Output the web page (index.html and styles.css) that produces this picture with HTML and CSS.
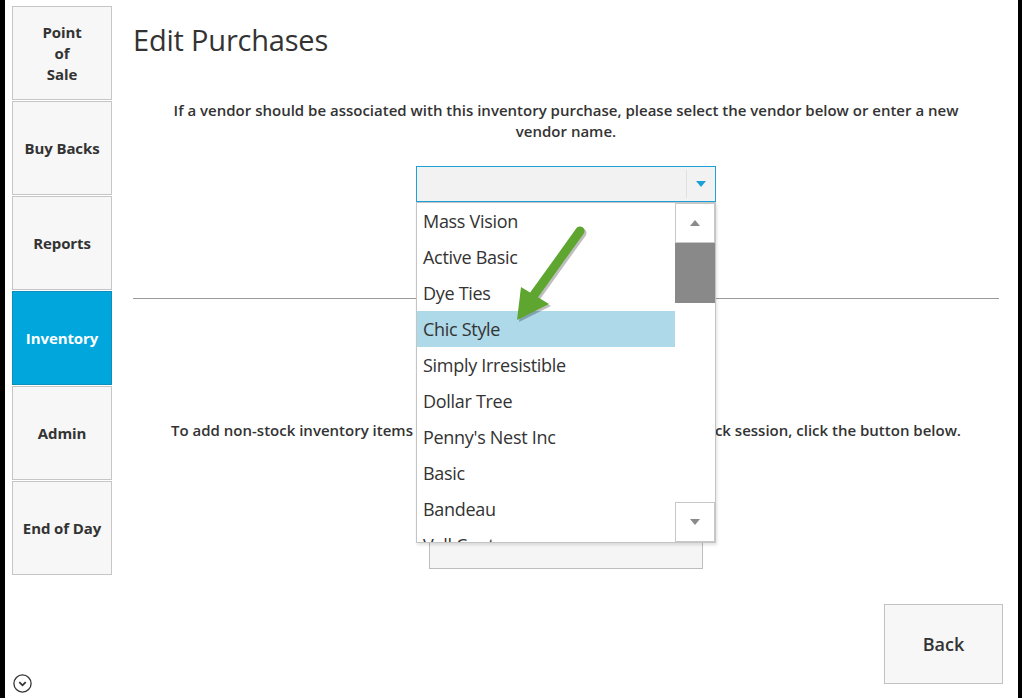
FILE: index.html
```html
<!DOCTYPE html>
<html lang="en">
<head>
    <meta charset="UTF-8">
    <title>Edit Purchases</title>
    <link rel="stylesheet" href="styles.css">
</head>
<body>
    <div class="app">
        <!-- Left navigation -->
        <nav class="sidebar">
            <a class="nav-btn">Point<br>of<br>Sale</a>
            <a class="nav-btn">Buy Backs</a>
            <a class="nav-btn">Reports</a>
            <a class="nav-btn active">Inventory</a>
            <a class="nav-btn">Admin</a>
            <a class="nav-btn">End of Day</a>
            <span class="expand-icon">
                <svg width="19" height="19" viewBox="0 0 19 19">
                    <circle cx="9.5" cy="9.5" r="8.6" fill="none" stroke="#333" stroke-width="1.3"/>
                    <path d="M6.3 8.2 L9.5 11.3 L12.7 8.2" fill="none" stroke="#333" stroke-width="1.8"/>
                </svg>
            </span>
        </nav>

        <main class="content">
            <h1>Edit Purchases</h1>
            <p class="prompt">If a vendor should be associated with this inventory purchase, please select the vendor below or enter a new vendor name.</p>

            <div class="vendor-picker">
                <div class="combo">
                    <span class="combo-value"></span>
                    <span class="combo-toggle"><i class="caret"></i></span>
                </div>
                <div class="dropdown">
                    <ul class="options">
                        <li>Mass Vision</li>
                        <li>Active Basic</li>
                        <li>Dye Ties</li>
                        <li class="selected">Chic Style</li>
                        <li>Simply Irresistible</li>
                        <li>Dollar Tree</li>
                        <li>Penny's Nest Inc</li>
                        <li>Basic</li>
                        <li>Bandeau</li>
                        <li>Vall Couture</li>
                    </ul>
                    <div class="scrollbar">
                        <span class="scroll-btn"><i class="tri up"></i></span>
                        <span class="thumb"></span>
                        <span class="track"></span>
                        <span class="scroll-btn"><i class="tri down"></i></span>
                    </div>
                </div>
            </div>

            <hr class="divider">

            <p class="nonstock">To add non-stock inventory items to this inventory purchase or to the restock session, click the button below.</p>
            <button class="add-btn">Add Items</button>

            <div class="footer">
                <button class="back-btn">Back</button>
            </div>
        </main>
    </div>

    <!-- green callout arrow drawn over the list -->
    <svg class="callout" width="1022" height="698" viewBox="0 0 1022 698">
        <g transform="translate(2,2)" fill="#000" opacity="0.25">
            <line x1="580" y1="231" x2="534" y2="295" stroke="#000" stroke-width="9" stroke-linecap="round"/>
            <polygon points="521,287 549,304 517,320"/>
        </g>
        <line x1="580" y1="231" x2="534" y2="295" stroke="#5fa630" stroke-width="9" stroke-linecap="round"/>
        <polygon points="521,287 549,304 517,320" fill="#5fa630"/>
    </svg>
</body>
</html>
```

FILE: styles.css
```css
* {
    margin: 0;
    padding: 0;
    box-sizing: border-box;
}

html, body {
    height: 100%;
}

body {
    font-family: 'Open Sans', 'Noto Sans', sans-serif;
    color: #333;
    background: white;
    border-left: 5px solid #000;
    border-right: 4px solid #000;
    overflow: hidden;
    position: relative;
}

.app {
    display: flex;
    height: 100%;
}

/* Sidebar */
.sidebar {
    width: 100px;
    margin-left: 7px;
    padding-top: 6px;
    display: flex;
    flex-direction: column;
}

.nav-btn {
    height: 94px;
    margin-bottom: 1px;
    background: #f7f7f7;
    border: 1px solid #c6c6c6;
    display: flex;
    align-items: center;
    justify-content: center;
    text-align: center;
    font-size: 15px;
    font-weight: 700;
    line-height: 21px;
    color: #333;
    letter-spacing: -0.1px;
}

.nav-btn.active {
    background: #00a6dc;
    border-color: #0d8fbd;
    color: white;
}

.expand-icon {
    margin-top: auto;
    margin-bottom: 5px;
    margin-left: 1px;
    width: 19px;
    height: 19px;
}

/* Main area */
.content {
    flex: 1;
    margin-left: 21px;
    padding-top: 22px;
    padding-right: 19px;
    display: flex;
    flex-direction: column;
}

.content h1 {
    font-size: 29px;
    font-weight: 400;
    line-height: 36px;
    color: #333;
    letter-spacing: -0.2px;
}

.prompt {
    margin: 42px 34px 0;
    text-align: center;
    font-size: 15px;
    font-weight: 600;
    line-height: 21px;
    letter-spacing: 0;
}

.vendor-picker {
    position: relative;
    width: 300px;
    margin: 24px 0 0 283px;
    z-index: 2;
}

.combo {
    height: 36px;
    display: flex;
    background: #f2f2f2;
    border: 1px solid #1ba1d6;
}

.combo-value {
    flex: 1;
}

.combo-toggle {
    width: 29px;
    margin: 3px 0;
    border-left: 1px solid #e0e0e0;
    display: flex;
    align-items: center;
    justify-content: center;
}

.caret {
    width: 0;
    height: 0;
    border-left: 5px solid transparent;
    border-right: 5px solid transparent;
    border-top: 6px solid #1ba1d6;
}

.dropdown {
    position: absolute;
    top: 36px;
    left: 0;
    width: 300px;
    height: 341px;
    display: flex;
    background: white;
    border: 1px solid #c4c4c4;
    box-shadow: 1px 2px 3px rgba(0, 0, 0, 0.12);
    overflow: hidden;
}

.options {
    flex: 1;
    list-style: none;
}

.options li {
    height: 36px;
    line-height: 36px;
    padding-left: 6px;
    font-size: 18px;
    color: #333;
    white-space: nowrap;
    letter-spacing: -0.3px;
}

.options li.selected {
    background: #add9e8;
}

.scrollbar {
    width: 40px;
    display: flex;
    flex-direction: column;
}

.scroll-btn {
    height: 40px;
    background: white;
    border: 1px solid #c8c8c8;
    display: flex;
    align-items: center;
    justify-content: center;
}

.thumb {
    height: 60px;
    background: #898989;
}

.track {
    flex: 1;
}

.tri {
    width: 0;
    height: 0;
    border-left: 5px solid transparent;
    border-right: 5px solid transparent;
}

.tri.up {
    border-bottom: 6px solid #8a8a8a;
}

.tri.down {
    border-top: 6px solid #8a8a8a;
}

.divider {
    margin-top: 96px;
    border: none;
    border-top: 1px solid #9a9a9a;
}

.nonstock {
    margin-top: 121px;
    text-align: center;
    font-size: 15px;
    font-weight: 600;
    line-height: 21px;
    letter-spacing: 0;
}

.add-btn {
    align-self: center;
    width: 274px;
    height: 80px;
    margin-top: 48px;
    padding-bottom: 30px;
    background: #f5f5f5;
    border: 1px solid #bdbdbd;
    font-family: inherit;
    font-size: 15px;
    font-weight: 600;
    color: #333;
}

.footer {
    margin-top: 35px;
    margin-right: -4px;
    display: flex;
    justify-content: flex-end;
}

.back-btn {
    width: 119px;
    height: 80px;
    background: #f7f7f7;
    border: 1px solid #c2c2c2;
    font-family: inherit;
    font-size: 18px;
    font-weight: 600;
    color: #333;
}

.callout {
    position: absolute;
    left: -5px;
    top: 0;
    pointer-events: none;
    z-index: 5;
}
```
